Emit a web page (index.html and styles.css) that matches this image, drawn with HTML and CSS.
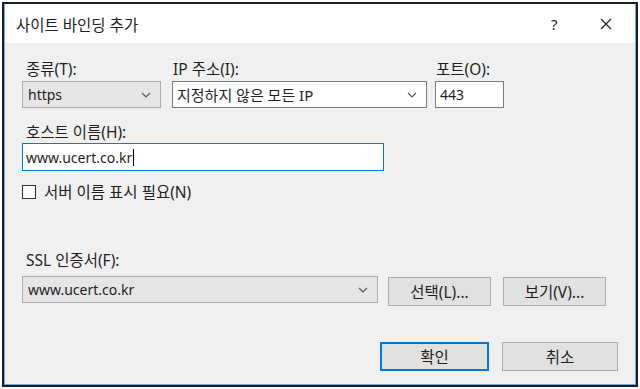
FILE: index.html
```html
<!DOCTYPE html>
<html lang="ko">
<head>
    <meta charset="UTF-8">
    <title>사이트 바인딩 추가</title>
    <link rel="stylesheet" href="styles.css">
</head>
<body>
    <div class="window">
        <div class="frame">
            <div class="titlebar">
                <span class="title">사이트 바인딩 추가</span>
                <span class="help">?</span>
                <svg class="close" width="12" height="12" viewBox="0 0 12 12">
                    <path d="M1 1 L11 11 M11 1 L1 11" stroke="#222" stroke-width="1.2" fill="none"/>
                </svg>
            </div>
            <div class="content">
                <div class="row-top">
                    <div class="field">
                        <label class="lbl">종류(T):</label>
                        <div class="combo combo-gray w-type">
                            <span>https</span>
                            <svg class="chev" width="10" height="6" viewBox="0 0 10 6"><path d="M1 1 L5 5 L9 1" stroke="#555" stroke-width="1.1" fill="none"/></svg>
                        </div>
                    </div>
                    <div class="field">
                        <label class="lbl flush">IP 주소(I):</label>
                        <div class="combo combo-white w-ip">
                            <span class="ko-value">지정하지 않은 모든 IP</span>
                            <svg class="chev" width="10" height="6" viewBox="0 0 10 6"><path d="M1 1 L5 5 L9 1" stroke="#555" stroke-width="1.1" fill="none"/></svg>
                        </div>
                    </div>
                    <div class="field">
                        <label class="lbl flush">포트(O):</label>
                        <div class="textbox w-port">443</div>
                    </div>
                </div>

                <label class="lbl host-lbl">호스트 이름(H):</label>
                <div class="textbox focused w-host">www.ucert.co.kr<span class="caret"></span></div>

                <div class="check-row">
                    <span class="checkbox"></span>
                    <span>서버 이름 표시 필요(N)</span>
                </div>

                <label class="lbl ssl-lbl">SSL 인증서(F):</label>
                <div class="ssl-row">
                    <div class="combo combo-gray w-ssl">
                        <span>www.ucert.co.kr</span>
                        <svg class="chev" width="10" height="6" viewBox="0 0 10 6"><path d="M1 1 L5 5 L9 1" stroke="#555" stroke-width="1.1" fill="none"/></svg>
                    </div>
                    <button class="btn w-sel">선택(L)...</button>
                    <button class="btn w-view">보기(V)...</button>
                </div>

                <div class="footer">
                    <button class="btn btn-default w-ok">확인</button>
                    <button class="btn w-cancel">취소</button>
                </div>
            </div>
        </div>
    </div>
</body>
</html>
```

FILE: styles.css
```css
* {
    box-sizing: border-box;
}

body {
    margin: 0;
    background-color: #ffffff;
    font-family: "Noto Sans", "Noto Sans CJK KR", sans-serif;
    font-size: 14px;
    color: #1f1f1f;
}

.window {
    margin: 2px 0 0 2px;
    width: 636px;
    height: 385px;
    border: 2px solid #1e1e1e;
}

.frame {
    height: 100%;
    border: 1px solid #6aaae6;
    border-top: none;
    display: flex;
    flex-direction: column;
    background-color: #f0f0f0;
}

.titlebar {
    height: 39px;
    background-color: #ffffff;
    display: flex;
    align-items: center;
    padding-left: 11px;
    padding-top: 1px;
}

.title {
    font-size: 15.5px;
    flex: 1;
}

.help {
    font-size: 15px;
    width: 43px;
    margin-right: 6px;
}

.close {
    margin-right: 23px;
}

.content {
    flex: 1;
    padding: 17px 0 0 17px;
    display: flex;
    flex-direction: column;
}

.lbl {
    display: block;
    font-size: 15.5px;
    line-height: 19px;
    padding-left: 4px;
}

.lbl.flush {
    padding-left: 1px;
}

.row-top {
    display: flex;
}

.field {
    display: flex;
    flex-direction: column;
    gap: 2px;
}

.w-type { width: 139px; margin-right: 11px; }
.w-ip { width: 255px; margin-right: 8px; }
.w-port { width: 69px; }
.w-host { width: 362px; }
.w-ssl { width: 356px; margin-right: 10px; }
.w-sel { width: 103px; margin-right: 12px; }
.w-view { width: 103px; }
.w-ok { width: 109px; margin-right: 13px; }
.w-cancel { width: 116px; }

.combo {
    height: 27px;
    display: flex;
    align-items: center;
    justify-content: space-between;
    padding: 0 9px 0 5px;
    border: 1px solid #adadad;
}

.combo-gray {
    background-color: #e5e5e5;
}

.combo-white {
    background-color: #ffffff;
    border-color: #7a7a7a;
    padding-left: 4px;
}

.ko-value {
    font-size: 15px;
}

.chev {
    flex-shrink: 0;
}

.textbox {
    height: 27px;
    background-color: #ffffff;
    border: 1px solid #7a7a7a;
    padding-left: 4px;
    display: flex;
    align-items: center;
}

.focused {
    height: 28px;
    border-color: #0078d7;
    padding-left: 3px;
}

.caret {
    display: inline-block;
    width: 1px;
    height: 17px;
    background-color: #000000;
    margin-left: 1px;
}

.host-lbl {
    margin-top: 15px;
    margin-bottom: 1px;
}

.check-row {
    margin-top: 9px;
    display: flex;
    align-items: center;
    gap: 8px;
    font-size: 15.5px;
}

.checkbox {
    width: 14px;
    height: 14px;
    background-color: #ffffff;
    border: 1px solid #333333;
}

.ssl-lbl {
    margin-top: 48px;
    margin-bottom: 6px;
}

.ssl-row {
    display: flex;
    align-items: flex-start;
}

.btn {
    height: 29px;
    font-family: inherit;
    font-size: 15.5px;
    color: #1f1f1f;
    background-color: #e1e1e1;
    border: 1px solid #adadad;
    padding: 0;
}

.ssl-row .btn {
    margin-top: 1px;
}

.footer {
    margin-top: 36px;
    display: flex;
    justify-content: flex-end;
    padding-right: 17px;
}

.btn-default {
    border: 2px solid #0078d7;
}
```
